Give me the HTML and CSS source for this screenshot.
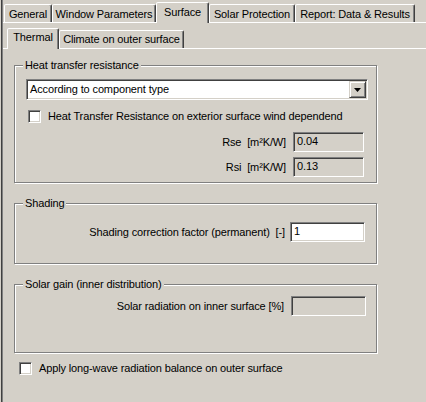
FILE: index.html
```html
<!DOCTYPE html>
<html>
<head>
<meta charset="utf-8">
<link rel="stylesheet" href="styles.css">
</head>
<body>
<div class="window">
  <div class="frame">
    <div class="tabstrip tabstrip-outer">
      <div class="tab tab-outer w-general">General</div>
      <div class="tab tab-outer w-window">Window Parameters</div>
      <div class="tab tab-outer is-active w-surface">Surface</div>
      <div class="tab tab-outer w-solar">Solar Protection</div>
      <div class="tab tab-outer w-report">Report: Data &amp; Results</div>
    </div>
    <div class="panel">
      <div class="tabstrip tabstrip-inner">
        <div class="tab tab-inner is-active w-thermal">Thermal</div>
        <div class="tab tab-inner w-climate">Climate on outer surface</div>
      </div>
      <div class="panel panel-inner">
        <div class="group group-heat">
          <div class="legend">Heat transfer resistance</div>
          <div class="combo sunken">
            <div class="combo-text">According to component type</div>
            <div class="combo-btn">
              <svg width="7" height="4" viewBox="0 0 7 4"><polygon points="0,0 7,0 3.5,4" fill="#000"/></svg>
            </div>
          </div>
          <div class="check-row check-heat">
            <div class="checkbox sunken"></div>
            <span>Heat Transfer Resistance on exterior surface wind dependend</span>
          </div>
          <div class="field-row row-rse">
            <span class="label">Rse  [m²K/W]</span>
            <div class="field sunken field-disabled w-r">0.04</div>
          </div>
          <div class="field-row row-rsi">
            <span class="label">Rsi  [m²K/W]</span>
            <div class="field sunken field-disabled w-r">0.13</div>
          </div>
        </div>
        <div class="group group-shading">
          <div class="legend">Shading</div>
          <div class="field-row row-shading">
            <span class="label">Shading correction factor (permanent)  [-]</span>
            <div class="field sunken field-white w-s">1</div>
          </div>
        </div>
        <div class="group group-solar">
          <div class="legend">Solar gain (inner distribution)</div>
          <div class="field-row row-solar">
            <span class="label">Solar radiation on inner surface [%]</span>
            <div class="field sunken field-disabled w-s"></div>
          </div>
        </div>
        <div class="check-row check-apply">
          <div class="checkbox sunken"></div>
          <span>Apply long-wave radiation balance on outer surface</span>
        </div>
      </div>
    </div>
  </div>
</div>
</body>
</html>
```

FILE: styles.css
```css
* { box-sizing: border-box; }
html, body { margin: 0; padding: 0; }
body {
  background: #d4d0c8;
  font-family: "Liberation Sans", Arial, sans-serif;
  font-size: 11px;
  line-height: 13px;
  letter-spacing: -0.13px;
  color: #000;
  width: 426px;
  height: 402px;
  overflow: hidden;
}
.window {
  margin-left: 1px;
  border-left: 1px solid #404040;
  height: 402px;
}
.frame {
  border-left: 1px solid #808080;
  height: 100%;
}
.tabstrip {
  display: flex;
  align-items: flex-end;
}
.tabstrip-outer { height: 22px; padding-left: 1px; }
.tabstrip-inner { height: 25px; padding-left: 4px; }
.tab {
  height: 18px;
  background: #d4d0c8;
  border: 1px solid;
  border-bottom: 0;
  border-color: #fff #404040 transparent #fff;
  box-shadow: inset -1px 0 #808080;
  border-radius: 2px 2px 0 0;
  text-align: center;
  white-space: nowrap;
  flex: none;
}
.tab-outer { padding-top: 3px; }
.tab-inner { padding-top: 2px; }
.tab.is-active {
  height: 21px;
  margin-bottom: -1px;
  position: relative;
  z-index: 1;
}
.w-general { width: 48px; }
.w-window { width: 104px; }
.w-surface { width: 53px; }
.w-solar { width: 86px; }
.w-report { width: 120px; }
.w-thermal { width: 52px; }
.w-climate { width: 125px; }

.panel { border-top: 1px solid #fff; }
.panel-inner { padding: 16px 0 0 11px; }

.group {
  width: 363px;
  border: 1px solid #808080;
  box-shadow: inset 1px 1px #fff, 1px 1px #fff;
  display: flex;
  flex-direction: column;
}
.legend {
  margin: -7px 0 0 8px;
  padding: 0 2px;
  background: #d4d0c8;
  align-self: flex-start;
  white-space: nowrap;
}
.group-heat { padding-bottom: 5px; }
.group-shading { margin-top: 20px; padding-bottom: 21px; }
.group-solar { margin-top: 20px; padding-bottom: 36px; }

.sunken {
  border: 1px solid;
  border-color: #808080 #fff #fff #808080;
  box-shadow: inset 1px 1px #404040, inset -1px -1px #d4d0c8;
}
.combo {
  margin: 7px 0 0 11px;
  width: 342px;
  height: 21px;
  padding: 1px;
  background: #fff;
  display: flex;
  align-items: center;
}
.combo-text { flex: 1; padding-left: 2px; }
.combo-btn {
  width: 17px;
  height: 17px;
  background: #d4d0c8;
  border: 1px solid;
  border-color: #d4d0c8 #404040 #404040 #d4d0c8;
  box-shadow: inset 1px 1px #fff, inset -1px -1px #808080;
  display: flex;
  align-items: center;
  justify-content: center;
}
.combo-btn svg { display: block; }

.check-row {
  display: flex;
  align-items: center;
  gap: 7px;
  height: 13px;
  white-space: nowrap;
}
.checkbox {
  width: 13px;
  height: 13px;
  background: #fff;
  flex: none;
}
.check-heat { margin: 10px 0 0 13px; }
.check-apply { margin: 9px 0 0 5px; }

.field-row {
  display: flex;
  justify-content: flex-end;
  align-items: center;
  gap: 7px;
}
.label { white-space: pre; }
.field {
  height: 20px;
  padding: 2px 0 0 3px;
  flex: none;
}
.field-disabled { background: #d4d0c8; }
.field-white { background: #fff; }
.w-r { width: 71px; }
.w-s { width: 75px; }
.row-rse { margin-top: 9px; padding-right: 12px; }
.row-rsi { margin-top: 5px; padding-right: 12px; }
.row-shading { margin-top: 12px; padding-right: 11px; gap: 5px; }
.row-solar { margin-top: 5px; padding-right: 10px; }
```
